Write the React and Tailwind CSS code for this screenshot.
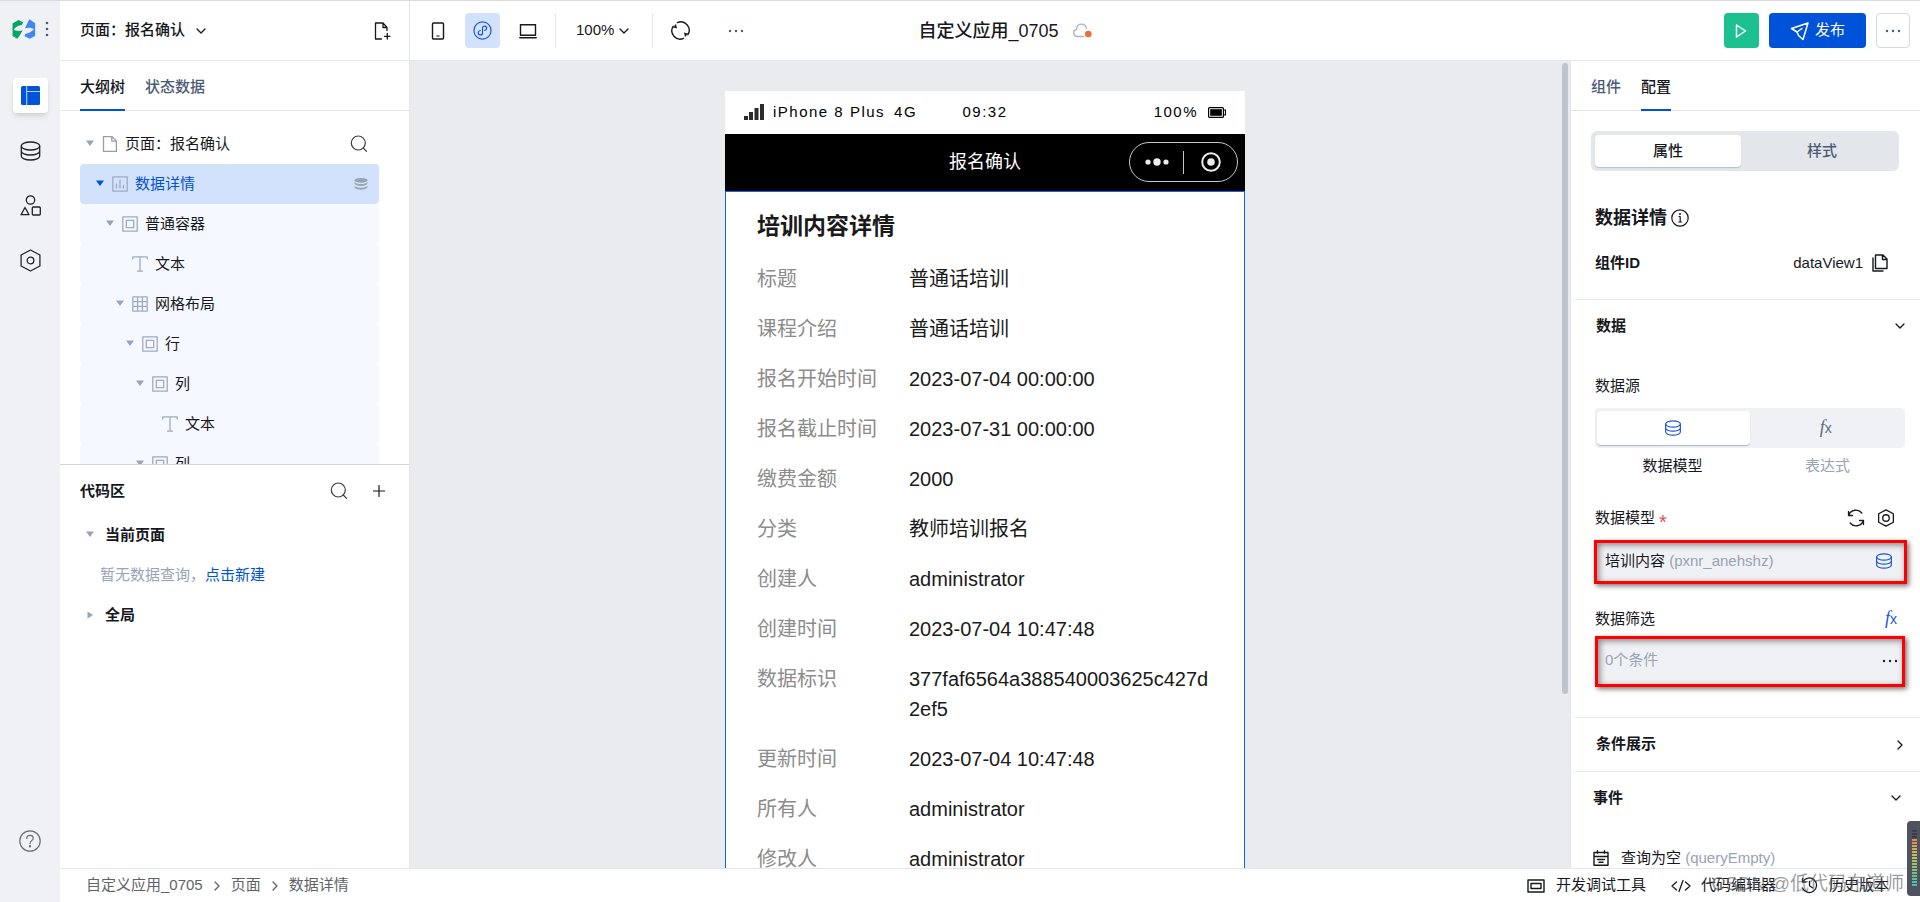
import React from "react";

const iconBase = { fill: "none", stroke: "currentColor", strokeLinecap: "round", strokeLinejoin: "round", "aria-hidden": true };

function Chevron({ className = "", dir = "down" }) {
  return (
    <svg {...iconBase} viewBox="0 0 12 12" strokeWidth="1.3" className={`h-3 w-3 shrink-0 ${className}`}>
      <path d={dir === "down" ? "M2 4l4 4 4-4" : "M4 2l4 4-4 4"} />
    </svg>
  );
}

function Dots({ className = "" }) {
  return (
    <svg viewBox="0 0 18 4" className={`h-1 w-[18px] shrink-0 ${className}`} fill="currentColor" aria-hidden="true">
      <circle cx="3" cy="2" r="1.2" />
      <circle cx="9" cy="2" r="1.2" />
      <circle cx="15" cy="2" r="1.2" />
    </svg>
  );
}

function Logo() {
  return (
    <svg viewBox="36 54 70 61" className="h-5 w-6 shrink-0" aria-hidden="true">
      <path fill="#07a568" d="M36 68 54 57l15 7-5 8c-9 1-18 5-24 14 6 5 16 6 27 2L57 106l-7 8-14-8z" />
      <path fill="#4285f4" d="M74 82 84 61l4-6 17 12v39l-17 8-16-8 4-7c9-2 18-6 25-14-6-5-16-6-27-3z" />
    </svg>
  );
}

function Database({ className = "", width = "1.3" }) {
  return (
    <svg {...iconBase} viewBox="0 0 20 20" strokeWidth={width} className={`shrink-0 ${className}`}>
      <ellipse cx="10" cy="5" rx="9.2" ry="4" />
      <path d="M.8 5v10c0 2.200 4.100 4 9.200 4s9.200-1.800 9.200-4V5M.8 10c0 2.200 4.100 4 9.200 4s9.200-1.800 9.200-4" />
    </svg>
  );
}

function DatabaseSolid() {
  return (
    <svg viewBox="0 0 14 14" className="h-3.5 w-3.5 shrink-0" aria-hidden="true">
      <g fill="#97a3b7">
        <ellipse cx="7" cy="3.300" rx="6.500" ry="2.400" />
        <path d="M.5 5c1 1.500 3.500 2 6.500 2s5.500-.5 6.500-2v1.500C13 8 10 9 7 9S1 8 .5 6.500zM.5 8.700c1 1.500 3.500 2 6.500 2s5.500-.5 6.500-2v1.500c-.5 1.500-3.500 2.500-6.500 2.500s-6-1-6.500-2.500z" />
      </g>
    </svg>
  );
}

function Shapes() {
  return (
    <svg {...iconBase} viewBox="0 0 21 21" strokeWidth="1.300" className="h-[21px] w-[21px]">
      <circle cx="10.500" cy="5" r="4.200" />
      <path d="M5 12.500 9 19.700H1z" />
      <rect x="12.300" y="12" width="8" height="8" rx="1" />
    </svg>
  );
}

function Hexagon({ className = "", r = 3.2, width = "1.2" }) {
  return (
    <svg {...iconBase} viewBox="0 0 22 22" strokeWidth={width} className={`shrink-0 ${className}`}>
      <path d="M11 1 20 5.800v10.400L11 21 2 16.200V5.800z" />
      <circle cx="11" cy="11" r={r} />
    </svg>
  );
}

function Help() {
  return (
    <svg {...iconBase} viewBox="0 0 22 22" strokeWidth="1.200" className="h-[22px] w-[22px]">
      <circle cx="11" cy="11" r="10.200" />
      <path d="M7.800 8.400c0-1.900 1.400-3 3.200-3s3.200 1.100 3.200 2.800c0 2.400-3.200 2.500-3.200 5.300" />
      <circle cx="11" cy="16.300" r=".6" fill="currentColor" />
    </svg>
  );
}

function Search() {
  return (
    <svg {...iconBase} viewBox="0 0 18 18" strokeWidth="1.200" className="h-[18px] w-[18px]">
      <circle cx="8.300" cy="8" r="7" />
      <path d="m13.300 13 3.200 3.300" />
    </svg>
  );
}

function FileAdd() {
  return (
    <svg {...iconBase} viewBox="0 0 18 18" strokeWidth="1.300" className="h-[18px] w-[18px]">
      <path d="M8.500 17H2.500V1h7.500l4 4.500v3M10 1v4.500h4M14.300 11.500v5.500M11.500 14.300H17" />
    </svg>
  );
}

function Copy() {
  return (
    <svg {...iconBase} viewBox="0 0 18 18" strokeWidth="1.400" className="h-[18px] w-[18px]">
      <path d="M4.500 1h7.500l4 4v9.500H4.500zM11.500 1v4.500H16M2 4v13h10" />
    </svg>
  );
}

function PhoneIcon() {
  return (
    <svg {...iconBase} viewBox="0 0 18 18" strokeWidth="1.400" className="h-[18px] w-[18px]">
      <rect x="3.500" y="1" width="11" height="16" rx="1" />
      <path d="M7.800 14h2.400" strokeWidth="1.200" />
    </svg>
  );
}

function MiniApp() {
  return (
    <svg {...iconBase} viewBox="0 0 24 24" strokeWidth="1.500" className="h-[19px] w-[19px]">
      <circle cx="12" cy="12" r="10.800" />
      <path d="M9.300 12C7.500 12.400 6.700 13.600 6.700 14.800 6.700 16.400 7.900 17.600 9.300 17.600 10.900 17.600 12 16.400 12 15V9C12 7.500 13.200 6.400 14.700 6.400c1.400 0 2.600 1.200 2.600 2.700 0 1.300-.8 2.400-2.600 2.900" />
    </svg>
  );
}

function Laptop() {
  return (
    <svg {...iconBase} viewBox="0 0 18 18" strokeWidth="1.400" className="h-[18px] w-[18px]">
      <rect x="1.500" y="2.800" width="15" height="10.500" />
      <path d="M.8 15.800h16.400" />
    </svg>
  );
}

function Rotate() {
  return (
    <svg {...iconBase} viewBox="0 0 18 18" strokeWidth="1.300" className="h-[19px] w-[19px]">
      <path d="M6 1.500A8 8 0 0 1 16 13M12 16.500A8 8 0 0 1 2 5" />
      <path d="M2.300 6.200 4.500 3.300 5.300 6.800M15.700 11.800l-2.200 2.900-.8-3.500" fill="currentColor" strokeWidth=".6" />
    </svg>
  );
}

function Refresh() {
  return (
    <svg {...iconBase} viewBox="0 0 18 18" strokeWidth="1.300" className="h-[18px] w-[18px]">
      <path d="M1.500 2.500v4h4M1.700 6.200A7.600 7.600 0 0 1 14.800 4M16.500 15.500v-4h-4M16.300 11.800A7.600 7.600 0 0 1 3.200 14" />
    </svg>
  );
}

function Cloud() {
  return (
    <svg {...iconBase} viewBox="0 0 19 15" strokeWidth="1.300" className="h-[15px] w-[19px]">
      <path stroke="#a9b4c6" d="M11 13.500H4.300A3.600 3.600 0 0 1 3.500 6.400C3.600 3.300 5.700 1.200 8.500 1.200c2.600 0 4.500 1.700 4.900 4.100" />
      <circle cx="15.300" cy="11" r="3.300" fill="#e8702e" stroke="none" />
    </svg>
  );
}

function Caret({ open = true, className = "" }) {
  return (
    <svg viewBox="0 0 10 10" className={`h-2.5 w-2.5 shrink-0 ${className}`} fill="currentColor" aria-hidden="true">
      <path d={open ? "M1 1.500h8L5 7z" : "M2.500 1.500v7L8 5z"} />
    </svg>
  );
}

function NodeIcon({ kind }) {
  return (
    <svg {...iconBase} viewBox="0 0 16 16" strokeWidth="1.300" className="h-4 w-4 shrink-0 text-[#9eabc2]">
      {kind === "page" && <path stroke="#9a9da3" d="M1.500.6h8.500l4.400 4.400v10.400H1.500zM9.800.8v4.400h4.400" />}
      {kind === "chart" && <path d="M.8.8h14.400v14.400H.8zM4.500 8v4M8 4v8M11.500 9.500V12" />}
      {kind === "box" && <path d="M.8.800h14.400v14.400H.800zM4.300 4.300h7.400v7.400H4.300z" />}
      {kind === "text" && <path d="M.8 3V.8h14.400V3M8 .8v14.400M5.500 15.200h5" />}
      {kind === "grid" && <path d="M.8.800h14.400v14.400H.800zM5.600.800v14.400M10.400.800v14.400M.800 5.600h14.400M.800 10.400h14.400" />}
    </svg>
  );
}

function Fx({ className = "" }) {
  return (
    <span className={`font-['Liberation_Serif',serif] text-lg leading-none italic ${className}`}>
      f<span className="text-sm not-italic font-['Liberation_Sans',sans-serif]">x</span>
    </span>
  );
}

const tree = [
  { label: "数据详情", kind: "chart", indent: "pl-[15px]", selected: true },
  { label: "普通容器", kind: "box", indent: "pl-[25px]" },
  { label: "文本", kind: "text", indent: "pl-[35px]", leaf: true },
  { label: "网格布局", kind: "grid", indent: "pl-[35px]" },
  { label: "行", kind: "box", indent: "pl-[45px]" },
  { label: "列", kind: "box", indent: "pl-[55px]" },
  { label: "文本", kind: "text", indent: "pl-[65px]", leaf: true },
  { label: "列", kind: "box", indent: "pl-[55px]" },
];

const details = [
  ["标题", "普通话培训"],
  ["课程介绍", "普通话培训"],
  ["报名开始时间", "2023-07-04 00:00:00"],
  ["报名截止时间", "2023-07-31 00:00:00"],
  ["缴费金额", "2000"],
  ["分类", "教师培训报名"],
  ["创建人", "administrator"],
  ["创建时间", "2023-07-04 10:47:48"],
  ["数据标识", "377faf6564a388540003625c427d2ef5"],
  ["更新时间", "2023-07-04 10:47:48"],
  ["所有人", "administrator"],
  ["修改人", "administrator"],
];

function Tabs({ items, active }) {
  return (
    <div role="tablist" className="flex h-[50px] shrink-0 gap-5 border-b border-[#e3e6eb] pl-5">
      {items.map((t) => (
        <button
          key={t}
          role="tab"
          aria-selected={t === active}
          className={
            t === active
              ? "-mb-px border-b-2 border-[#0052d9] pt-1 font-medium text-[#16181d]"
              : "-mb-px border-b-2 border-transparent pt-1 font-medium text-[#4b5b76]"
          }
        >
          {t}
        </button>
      ))}
    </div>
  );
}

function Rail() {
  const item = "flex h-[35px] w-[35px] items-center justify-center rounded";
  return (
    <nav aria-label="主导航" className="flex w-[60px] shrink-0 flex-col items-center gap-5 bg-[#f0f1f5] pb-11 text-[#1d2129]">
      <div className="mb-0.5 flex h-[55px] w-full items-center gap-[9px] pl-3">
        <Logo />
        <button aria-label="更多" className="text-[#4b5b76]">
          <svg viewBox="0 0 4 18" className="h-[18px] w-1" fill="currentColor" aria-hidden="true">
            <circle cx="2" cy="3" r="1.300" />
            <circle cx="2" cy="9" r="1.300" />
            <circle cx="2" cy="15" r="1.300" />
          </svg>
        </button>
      </div>
      <button aria-label="页面设计" className={`${item} bg-white shadow-md`}>
        <svg viewBox="0 0 19 19" className="h-[19px] w-[19px]" aria-hidden="true">
          <rect width="19" height="19" rx="1.500" fill="#0052d9" />
          <path d="M5.700 0v19M5.700 5.500H19" stroke="#b9d0f8" strokeWidth="1.100" />
        </svg>
      </button>
      <button aria-label="数据源" className={item}><Database className="h-5 w-[21px]" /></button>
      <button aria-label="组件" className={item}><Shapes /></button>
      <button aria-label="设置" className={item}><Hexagon className="h-[23px] w-[23px]" /></button>
      <button aria-label="帮助" className={`${item} mt-auto text-[#6b6e76]`}><Help /></button>
    </nav>
  );
}

function Header() {
  const tool = "flex h-[35px] w-[35px] items-center justify-center rounded";
  return (
    <header className="flex h-[60px] shrink-0 border-b border-[#e3e6eb] bg-white">
      <div className="flex flex-1 items-center">
        <div className="flex h-full w-[350px] shrink-0 items-center justify-between border-r border-[#e3e6eb] pr-[18px] pl-5">
          <div className="flex items-center gap-2.5">
            <select aria-label="当前页面" className="field-sizing-content appearance-none bg-transparent font-medium">
              <option>页面：报名确认</option>
            </select>
            <Chevron />
          </div>
          <button aria-label="新建页面"><FileAdd /></button>
        </div>
        <div className="flex items-center gap-2.5 pl-2.5">
          <button aria-label="手机预览" className={tool}><PhoneIcon /></button>
          <button aria-label="小程序预览" className={`${tool} bg-[#d3e2fc] text-[#1c55dc]`}><MiniApp /></button>
          <button aria-label="电脑预览" className={tool}><Laptop /></button>
          <div className="h-[34px] w-px bg-[#e3e6eb]" />
          <div className="flex w-[76px] items-center gap-1 pl-2.5">
            <select aria-label="缩放" className="field-sizing-content appearance-none bg-transparent">
              <option>100%</option>
            </select>
            <Chevron />
          </div>
          <div className="h-[34px] w-px bg-[#e3e6eb]" />
          <button aria-label="刷新" className={tool}><Rotate /></button>
          <button aria-label="更多工具" className={`${tool} ml-2.5 text-[#4b5b76]`}><Dots /></button>
        </div>
      </div>
      <div className="flex items-center gap-3.5 pl-10">
        <h1 className="text-lg font-medium">自定义应用_0705</h1>
        <Cloud />
      </div>
      <div className="flex flex-1 items-center justify-end gap-2.5 pr-2.5">
        <button aria-label="预览" className={`${tool} bg-[#1dc190] text-white`}>
          <svg {...iconBase} viewBox="0 0 12 14" strokeWidth="1.500" className="h-3.5 w-3">
            <path d="M1.500 1 10.500 7l-9 6z" />
          </svg>
        </button>
        <button className="flex h-[35px] items-center gap-[5px] rounded bg-[#0052d9] px-[21px] text-white">
          <svg {...iconBase} viewBox="0 0 20 20" strokeWidth="1.500" className="h-5 w-5">
            <path d="M18 2 1.500 7.500 7 11l1.500 3.500L13 18.500zM7 11l5-3.500" />
          </svg>
          发布
        </button>
        <button aria-label="更多操作" className="flex h-[35px] w-[34px] items-center justify-center rounded border border-[#d5d9e2] text-[#4b5b76]">
          <Dots />
        </button>
      </div>
    </header>
  );
}

function LeftPanel() {
  return (
    <aside className="flex w-[350px] shrink-0 flex-col border-r border-[#e3e6eb] bg-white">
      <section className="flex min-h-0 flex-1 flex-col overflow-hidden">
        <Tabs items={["大纲树", "状态数据"]} active="大纲树" />
        <div className="min-h-0 flex-1 overflow-hidden pt-[13px] pr-[30px] pl-5">
          <div className="flex h-10 items-center gap-[7px] pr-[11px] pl-[5px]">
            <Caret className="text-[#97a3b7]" />
            <NodeIcon kind="page" />
            <span>页面：报名确认</span>
            <button aria-label="搜索组件" className="ml-auto text-[#3a3d44]"><Search /></button>
          </div>
          <ul>
            {tree.map((n, i) => (
              <li key={i}>
                <button
                  className={`flex h-10 w-full items-center gap-[7px] rounded pr-[11px] ${n.indent} ${
                    n.selected ? "bg-[#d3e2fc] text-[#0052d9]" : "bg-[#f5f8ff]"
                  }`}
                >
                  <Caret className={n.leaf ? "invisible" : n.selected ? "" : "text-[#97a3b7]"} />
                  <NodeIcon kind={n.kind} />
                  <span>{n.label}</span>
                  {n.selected && <span className="ml-auto"><DatabaseSolid /></span>}
                </button>
              </li>
            ))}
          </ul>
        </div>
      </section>
      <section className="min-h-0 flex-1 overflow-hidden border-t border-[#d0d4dc]">
        <div className="flex h-[50px] items-center pt-0.5 pr-[21px] pl-5">
          <h2 className="font-bold">代码区</h2>
          <button aria-label="搜索代码" className="ml-auto text-[#3a3d44]"><Search /></button>
          <button aria-label="新建" className="ml-[22px] flex w-[18px] justify-center">
            <svg {...iconBase} viewBox="0 0 12 12" strokeWidth="1.200" className="h-3 w-3">
              <path d="M6 .5v11M.5 6h11" />
            </svg>
          </button>
        </div>
        <button className="flex h-10 items-center gap-2.5 pl-[25px] font-bold">
          <Caret className="text-[#97a3b7]" />
          当前页面
        </button>
        <p className="flex h-10 items-center pl-10 text-[#97a3b7]">
          暂无数据查询，<a href="#new" className="text-[#0052d9]">点击新建</a>
        </p>
        <button className="flex h-10 items-center gap-2.5 pl-[25px] font-bold">
          <Caret open={false} className="text-[#97a3b7]" />
          全局
        </button>
      </section>
    </aside>
  );
}

function StatusBar() {
  return (
    <div className="flex h-[43px] items-center px-[19px] pb-px text-[15px] leading-5 tracking-widest">
      <div className="flex flex-1 items-center gap-[9px]">
        <svg viewBox="0 0 20 16" className="h-4 w-5" fill="#2b2b2b" aria-hidden="true">
          <path d="M0 12h4v4H0zM5 8h4v8H5zM10.500 4h4v12h-4zM16 0h4v16h-4z" />
        </svg>
        <span>iPhone 8 Plus</span>
        <span>4G</span>
      </div>
      <span>09:32</span>
      <div className="flex flex-1 items-center justify-end gap-2.5">
        <span>100%</span>
        <svg viewBox="0 0 18 11" className="h-[11px] w-[18px]" aria-hidden="true">
          <rect x=".6" y=".6" width="14.800" height="9.800" rx="1" fill="none" stroke="#000" strokeWidth="1.200" />
          <rect x="2.200" y="2.200" width="11.600" height="6.600" />
          <path d="M15.500 3h2v5h-2" fill="none" stroke="#000" strokeWidth="1.200" />
        </svg>
      </div>
    </div>
  );
}

function Canvas() {
  return (
    <main className="relative flex min-w-0 flex-1 justify-center overflow-hidden bg-[#eaebef] pt-[30px] pr-2.5">
      <div className="w-[520px] shrink-0 text-black">
        <div className="bg-white">
          <StatusBar />
        </div>
        <div className="flex h-[57px] items-center bg-black pr-[7px] pb-px pl-[7px] text-white">
          <div className="flex-1" />
          <h2 className="text-lg">报名确认</h2>
          <div className="flex flex-1 justify-end">
            <div className="flex h-10 w-[109px] items-center rounded-full border border-[#c8c8c8] text-[#ececec]">
              <button aria-label="菜单" className="flex flex-1 justify-center">
                <svg viewBox="0 0 24 8" className="h-2 w-6" fill="currentColor" aria-hidden="true">
                  <circle cx="3" cy="4" r="2.600" />
                  <circle cx="12" cy="4" r="3.700" />
                  <circle cx="21" cy="4" r="2.600" />
                </svg>
              </button>
              <div className="h-[23px] w-px bg-[#c8c8c8]" />
              <button aria-label="关闭" className="flex flex-1 justify-center">
                <svg viewBox="0 0 20 20" className="h-5 w-5" aria-hidden="true">
                  <circle cx="10" cy="10" r="8.800" fill="none" stroke="currentColor" strokeWidth="2" />
                  <circle cx="10" cy="10" r="3.800" fill="currentColor" />
                </svg>
              </button>
            </div>
          </div>
        </div>
        <div className="border border-[#0a66f5] bg-white px-[31px] pt-[19px] pb-10 text-xl leading-[30px] text-[#1a1a1a]">
          <h3 className="text-[23px] font-bold leading-[30px]">培训内容详情</h3>
          <dl className="mt-[23px] flex flex-col gap-5">
            {details.map(([k, v]) => (
              <div key={k} className="flex">
                <dt className="w-[152px] shrink-0 text-[#8c8c8c]">{k}</dt>
                <dd className="min-w-0 flex-1 break-all">{v}</dd>
              </div>
            ))}
          </dl>
        </div>
      </div>
      <div className="absolute top-0.5 right-0.5 h-[631px] w-1.5 rounded-full bg-[#bcc4d0]" />
    </main>
  );
}

const markBox = "border-[3px] border-[#ff0000] bg-[#f0f1f5] shadow-[2px_2px_5px_rgba(0,0,0,0.55),inset_2px_2px_6px_rgba(0,0,0,0.45)]";

function RightPanel() {
  return (
    <aside className="flex w-[350px] shrink-0 flex-col overflow-hidden border-l border-[#e3e6eb] bg-white">
      <Tabs items={["组件", "配置"]} active="配置" />
      <div className="min-h-0 flex-1 overflow-hidden">
        <div role="tablist" className="mt-5 mr-[21px] ml-5 grid h-10 grid-cols-2 gap-2 rounded-md bg-[#e3e6eb] p-1 font-medium">
          <button role="tab" aria-selected="true" className="rounded-sm bg-white shadow-[0_1px_1px_#b3bdcc]">属性</button>
          <button role="tab" aria-selected="false" className="text-[#4b5b76]">样式</button>
        </div>
        <div className="mt-8 mr-[31px] ml-6">
          <div className="flex h-[30px] items-center gap-1">
            <h2 className="text-lg font-bold">数据详情</h2>
            <button aria-label="组件说明">
              <svg {...iconBase} viewBox="0 0 18 18" strokeWidth="1.200" className="h-[18px] w-[18px]">
                <circle cx="9" cy="9" r="8.200" />
                <path d="M8 7.500h1.200V13M7.800 13h2.800" />
                <circle cx="9" cy="5" r=".4" fill="currentColor" />
              </svg>
            </button>
          </div>
          <div className="mt-[15px] flex h-[30px] items-center justify-between">
            <span className="font-bold">组件ID</span>
            <span className="flex items-center gap-2">
              dataView1
              <button aria-label="复制"><Copy /></button>
            </span>
          </div>
        </div>
        <div className="mt-[21px] ml-1">
          <section className="border-t border-[#e3e6eb] pb-[30px]">
            <button className="flex h-[52px] w-full items-center justify-between pr-3.5 pl-[21px] font-bold">
              数据
              <Chevron />
            </button>
            <div className="mt-[19px] pr-[15px] pl-5">
              <div className="flex h-[30px] items-center">数据源</div>
              <div className="mt-[7px] grid h-10 grid-cols-2 rounded bg-[#f0f1f5] py-[3px] pr-[3px] pl-0.5">
                <button aria-label="数据模型" className="flex items-center justify-center rounded bg-white text-[#1c55dc] shadow-[0_1px_1px_#aab5c6]">
                  <Database className="h-4 w-[18px]" width="1.5" />
                </button>
                <button aria-label="表达式" className="flex items-center justify-center text-[#5d6b84]"><Fx /></button>
              </div>
              <div className="mt-[3px] grid h-[30px] grid-cols-2 items-center text-center">
                <span>数据模型</span>
                <span className="text-[#97a3b7]">表达式</span>
              </div>
              <div className="mt-[22px] flex h-[30px] items-center pr-2.5">
                <span>数据模型</span>
                <span className="ml-1 pt-2 text-xl leading-none text-[#e34d59]">*</span>
                <button aria-label="刷新模型" className="ml-auto"><Refresh /></button>
                <button aria-label="模型设置" className="ml-3"><Hexagon className="h-[18px] w-[18px]" r={4} width="1.6" /></button>
              </div>
              <button className={`-mx-px mt-[7px] flex h-11 w-[calc(100%+3px)] items-center justify-between pr-[11px] pb-0.5 pl-2 ${markBox}`}>
                <span>
                  培训内容 <span className="text-[#97a3b7]">(pxnr_anehshz)</span>
                </span>
                <span className="text-[#1c55dc]"><Database className="h-4 w-[18px]" width="1.5" /></span>
              </button>
              <div className="mt-5 flex h-[30px] items-center justify-between pr-2">
                <span>数据筛选</span>
                <button aria-label="表达式筛选" className="text-[#1c55dc]"><Fx /></button>
              </div>
              <button className={`mt-0.5 flex h-[51px] w-full items-center justify-between pr-[3px] pb-0.5 pl-[7px] text-[#97a3b7] ${markBox}`}>
                0个条件
                <Dots className="text-[#1d2129]" />
              </button>
            </div>
          </section>
          <button className="flex h-[54px] w-full items-center justify-between border-t border-[#e3e6eb] pr-3.5 pl-[21px] font-bold">
            条件展示
            <Chevron dir="right" />
          </button>
          <section className="border-t border-[#e3e6eb] pr-[18px] pl-[18px]">
            <button className="flex h-[52px] w-full items-center justify-between font-bold">
              事件
              <Chevron />
            </button>
            <button className="mt-[19px] flex h-[30px] items-center gap-3">
              <svg {...iconBase} viewBox="0 0 16 16" strokeWidth="1.400" className="h-4 w-4">
                <path d="M1 2.500h14v12.700H1zM1 6.500h14M4.500.8v2.500M11.500.8v2.500M4.500 9.500h7M6 12.200h4" />
              </svg>
              <span>
                查询为空 <span className="text-[#97a3b7]">(queryEmpty)</span>
              </span>
            </button>
          </section>
        </div>
      </div>
    </aside>
  );
}

function Footer() {
  return (
    <footer className="flex h-[34px] shrink-0 items-center justify-between border-t border-[#e3e6eb] bg-white pr-[31px] pl-[26px]">
      <nav aria-label="面包屑" className="flex items-center gap-2 text-[#5f6368]">
        <a href="#app">自定义应用_0705</a>
        <Chevron dir="right" />
        <a href="#page">页面</a>
        <Chevron dir="right" />
        <a href="#detail">数据详情</a>
      </nav>
      <div className="flex items-center gap-[25px]">
        <button className="flex items-center gap-[11px]">
          <svg {...iconBase} viewBox="0 0 18 14" strokeWidth="1.400" className="h-3.5 w-[18px]">
            <path d="M1 1h16v12H1zM4 4.500h10v5H4z" />
          </svg>
          开发调试工具
        </button>
        <button className="flex items-center gap-2.5">
          <svg {...iconBase} viewBox="0 0 20 14" strokeWidth="1.300" className="h-3.5 w-5">
            <path d="M5.500 3 1 7l4.500 4M14.500 3 19 7l-4.500 4M12 1.500 8 12.500" />
          </svg>
          代码编辑器
        </button>
        <button className="flex items-center gap-[11px]">
          <svg {...iconBase} viewBox="0 0 17 17" strokeWidth="1.300" className="h-[17px] w-[17px]">
            <path d="M2 4.500A7.300 7.300 0 1 1 1.500 11M1.500 1.500v3.500H5M8.500 4.500v4.300l3 2" />
          </svg>
          历史版本
        </button>
      </div>
    </footer>
  );
}

const levels = [
  "#3a3c46", "#3a3c46", "#3a3c46", "#e2895b", "#dd9455", "#d7a053", "#d2ab52", "#cdb653", "#c8bd55", "#bcc05a",
  "#b0c160", "#a2c267", "#92c36f", "#83c377", "#74c37f", "#66c388", "#59c392", "#4fc39c", "#49c3a8",
];

function LevelMeter() {
  return (
    <svg viewBox="0 0 13 75" className="absolute right-0 bottom-1.5 h-[75px] w-[13px]" aria-hidden="true">
      <path d="M4 0h9v75H4a4 4 0 0 1-4-4V4a4 4 0 0 1 4-4z" fill="#50535f" />
      {levels.map((c, i) => (
        <rect key={i} x="5" y={9 + i * 3} width="5" height="2" fill={c} />
      ))}
    </svg>
  );
}

export default function App() {
  return (
    <div className="relative flex h-screen overflow-hidden border-t border-[#d9dbdf] bg-white font-['Liberation_Sans','Noto_Sans_CJK_SC',sans-serif] text-[15px] text-[#16181d]">
      <Rail />
      <div className="flex min-w-0 flex-1 flex-col">
        <Header />
        <div className="flex min-h-0 flex-1">
          <LeftPanel />
          <Canvas />
          <RightPanel />
        </div>
        <Footer />
      </div>
      <div className="pointer-events-none absolute right-4 bottom-1 text-[19px] text-[#55585f]/60">CSDN @低代码布道师</div>
      <LevelMeter />
    </div>
  );
}
